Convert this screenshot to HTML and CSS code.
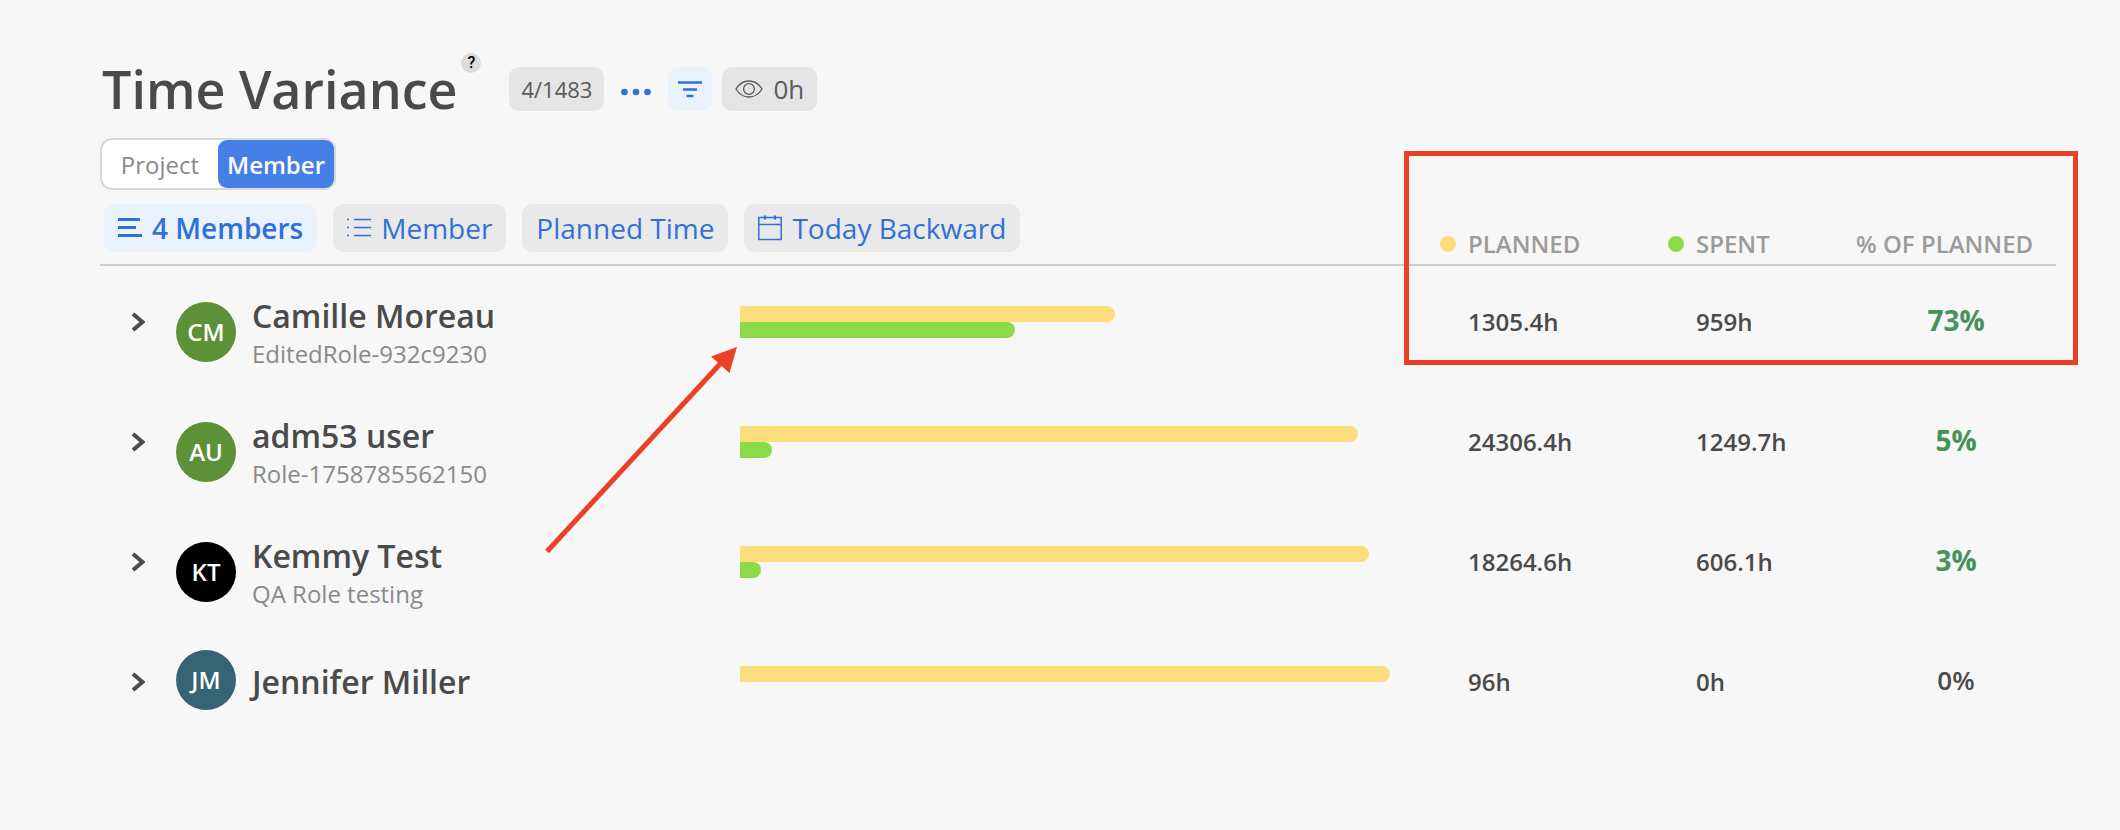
FILE: index.html
```html
<!DOCTYPE html>
<html lang="en">
<head>
    <meta charset="UTF-8">
    <meta name="viewport" content="width=device-width, initial-scale=1.0">
    <title>Time Variance</title>
    <link rel="stylesheet" href="styles.css">
</head>
<body>

    <div class="page">
        <!-- Title bar -->
        <header class="page-header">
            <div class="title-wrap">
                <h1>Time Variance</h1>
                <button type="button" class="help">?</button>
            </div>
            <button type="button" class="chip count">4/1483</button>
            <button type="button" class="more" aria-label="More">
                <svg width="30" height="8" viewBox="0 0 30 8"><circle cx="3.5" cy="4" r="3.3"/><circle cx="15" cy="4" r="3.3"/><circle cx="26.5" cy="4" r="3.3"/></svg>
            </button>
            <button type="button" class="chip filter" aria-label="Filter">
                <svg width="24" height="18" viewBox="0 0 24 18"><path d="M0 2.5h24M5 9.5h14M8.5 16h7"/></svg>
            </button>
            <button type="button" class="chip hours">
                <svg width="28" height="18" viewBox="0 0 28 18"><path d="M1 9C4 4 9 1 14 1s10 3 13 8c-3 5-8 8-13 8S4 14 1 9z"/><circle cx="14" cy="9" r="5.4"/></svg>
                0h
            </button>
        </header>

        <div class="toggle">
            <button type="button">Project</button>
            <button type="button" class="active">Member</button>
        </div>

        <!-- Variance table -->
        <div class="report">
            <table class="variance">
                <colgroup>
                    <col class="col-member">
                    <col>
                    <col class="col-planned">
                    <col class="col-spent">
                    <col class="col-percent">
                </colgroup>
                <thead>
                    <tr>
                        <th colspan="2">
                            <div class="toolbar">
                                <button type="button" class="pill active">
                                    <svg width="24" height="24" viewBox="0 0 24 24" stroke-width="3"><path d="M0 3.5h22M0 11.5h18M0 19.5h24"/></svg>
                                    4 Members
                                </button>
                                <button type="button" class="pill">
                                    <svg width="24" height="24" viewBox="0 0 24 24" stroke-width="1.5"><path d="M7 3.5h17M7 11.5h17M7 19.5h17M0 3.5h2M0 11.5h2M0 19.5h2"/></svg>
                                    Member
                                </button>
                                <button type="button" class="pill">Planned Time</button>
                                <button type="button" class="pill">
                                    <svg width="24" height="26" viewBox="0 0 24 26" stroke-width="1.5"><path d="M.8 2.5h22.4v22H.8zM.8 9.5h22.4"/><path d="M7 .5v4M17 .5v4" stroke-width="2.2"/></svg>
                                    Today Backward
                                </button>
                            </div>
                        </th>
                        <th><span class="legend planned">PLANNED</span></th>
                        <th><span class="legend spent">SPENT</span></th>
                        <th class="percent-head">% OF PLANNED</th>
                    </tr>
                </thead>
                <tbody>
                    <tr>
                        <td>
                            <div class="member">
                                <button type="button" class="expand" aria-label="Expand"><svg width="14" height="20" viewBox="0 0 14 20"><path d="M2 2l9.500 8L2 18"/></svg></button>
                                <span class="avatar green">CM</span>
                                <div class="who">
                                    <p class="name">Camille Moreau</p>
                                    <p class="role">EditedRole-932c9230</p>
                                </div>
                            </div>
                        </td>
                        <td>
                            <div class="bars">
                                <div class="bar planned" style="width: 57.7%"></div>
                                <div class="bar spent" style="width: 42.3%"></div>
                            </div>
                        </td>
                        <td class="value">1305.4h</td>
                        <td class="value">959h</td>
                        <td class="percent good">73%</td>
                    </tr>
                    <tr>
                        <td>
                            <div class="member">
                                <button type="button" class="expand" aria-label="Expand"><svg width="14" height="20" viewBox="0 0 14 20"><path d="M2 2l9.500 8L2 18"/></svg></button>
                                <span class="avatar green">AU</span>
                                <div class="who">
                                    <p class="name">adm53 user</p>
                                    <p class="role">Role-1758785562150</p>
                                </div>
                            </div>
                        </td>
                        <td>
                            <div class="bars">
                                <div class="bar planned" style="width: 95.1%"></div>
                                <div class="bar spent" style="width: 4.9%"></div>
                            </div>
                        </td>
                        <td class="value">24306.4h</td>
                        <td class="value">1249.7h</td>
                        <td class="percent good">5%</td>
                    </tr>
                    <tr>
                        <td>
                            <div class="member">
                                <button type="button" class="expand" aria-label="Expand"><svg width="14" height="20" viewBox="0 0 14 20"><path d="M2 2l9.500 8L2 18"/></svg></button>
                                <span class="avatar black">KT</span>
                                <div class="who">
                                    <p class="name">Kemmy Test</p>
                                    <p class="role">QA Role testing</p>
                                </div>
                            </div>
                        </td>
                        <td>
                            <div class="bars">
                                <div class="bar planned" style="width: 96.8%"></div>
                                <div class="bar spent" style="width: 3.2%"></div>
                            </div>
                        </td>
                        <td class="value">18264.6h</td>
                        <td class="value">606.1h</td>
                        <td class="percent good">3%</td>
                    </tr>
                    <tr>
                        <td>
                            <div class="member no-role">
                                <button type="button" class="expand" aria-label="Expand"><svg width="14" height="20" viewBox="0 0 14 20"><path d="M2 2l9.500 8L2 18"/></svg></button>
                                <span class="avatar teal">JM</span>
                                <div class="who">
                                    <p class="name">Jennifer Miller</p>
                                </div>
                            </div>
                        </td>
                        <td>
                            <div class="bars">
                                <div class="bar planned" style="width: 100%"></div>
                            </div>
                        </td>
                        <td class="value">96h</td>
                        <td class="value">0h</td>
                        <td class="percent">0%</td>
                    </tr>
                </tbody>
            </table>

            <!-- Callouts -->
            <div class="callout-box"></div>
            <svg class="callout-arrow" width="192" height="208" viewBox="0 0 192 208"><path d="M2 205.500L176 17" stroke="#eb4026" stroke-width="5"/><path d="M192 1L166 10.500L184.500 27z" fill="#eb4026"/></svg>
        </div>
    </div>

</body>
</html>
```
FILE: styles.css
```css
* {
    margin: 0;
    padding: 0;
    box-sizing: border-box;
}

body {
    font-family: 'Open Sans', 'Noto Sans', sans-serif;
    background: #f7f7f7;
    color: #4a4a4a;
}

button {
    font-family: inherit;
    color: inherit;
    background: none;
    border: none;
    cursor: pointer;
}

svg {
    display: block;
    flex-shrink: 0;
}

.page {
    padding: 53px 64px 40px 100px;
}

/* Title bar */
.page-header {
    display: flex;
    align-items: center;
}

.title-wrap {
    display: flex;
    align-items: flex-start;
    gap: 4px;
    padding-left: 2px;
    margin-right: 28px;
}

h1 {
    font-size: 52px;
    font-weight: 600;
    line-height: 72px;
}

.help {
    width: 20px;
    height: 20px;
    border-radius: 50%;
    background: #dcdcdc;
    color: #000;
    font-family: Roboto, sans-serif;
    font-size: 16px;
    font-weight: 500;
    line-height: 20px;
}

.chip {
    display: flex;
    align-items: center;
    justify-content: center;
    height: 44px;
    border-radius: 10px;
    background: #e5e5e5;
    color: #5a5a5a;
}

.count {
    padding: 0 12px;
    font-size: 22px;
}

.more {
    padding: 6px 17px 0;
    fill: #2f71d8;
}

.filter {
    width: 44px;
    margin-right: 10px;
    background: #eaf2fc;
}

.filter svg {
    fill: none;
    stroke: #2f71d8;
    stroke-width: 2.5;
}

.hours {
    gap: 10px;
    padding: 0 13px;
    font-size: 26px;
}

.hours svg {
    fill: none;
    stroke: #5a5a5a;
    stroke-width: 1.3;
}

/* Project / Member switch */
.toggle {
    display: flex;
    width: fit-content;
    margin-top: 13px;
    border: 2px solid #d8d8d8;
    border-radius: 12px;
    background: #fff;
}

.toggle button {
    width: 116px;
    height: 48px;
    border-radius: 9px;
    font-size: 24px;
    color: #8a8a8a;
}

.toggle .active {
    background: #467fe6;
    color: #fff;
    font-weight: 600;
}

/* Variance table */
.report {
    position: relative;
}

.variance {
    width: 100%;
    table-layout: fixed;
    border-collapse: separate;
    border-spacing: 0;
}

.col-member {
    width: 640px;
}

.col-planned {
    width: 228px;
}

.col-spent {
    width: 188px;
}

.col-percent {
    width: 200px;
}

th {
    padding-bottom: 4px;
    border-bottom: 2px solid #cbcbcb;
    font-size: 24px;
    font-weight: 600;
    line-height: 32px;
    text-align: left;
    vertical-align: bottom;
    color: #9b9b9b;
}

.percent-head {
    white-space: nowrap;
}

.toolbar {
    display: flex;
    gap: 16px;
    padding: 14px 0 8px 4px;
}

.pill {
    display: flex;
    align-items: center;
    gap: 10px;
    height: 48px;
    padding: 0 14px;
    border-radius: 10px;
    background: #e9e9e9;
    color: #2f71d8;
    font-size: 28px;
    white-space: nowrap;
}

.pill.active {
    background: #eaf2fc;
    font-weight: 600;
}

.pill svg {
    fill: none;
    stroke: #2f71d8;
}

.legend {
    display: flex;
    align-items: center;
    gap: 12px;
}

.legend::before {
    content: "";
    width: 16px;
    height: 16px;
    border-radius: 50%;
}

.planned::before,
.bar.planned {
    background: #fbdd7a;
}

.spent::before,
.bar.spent {
    background: #8adb47;
}

td {
    height: 120px;
    vertical-align: top;
}

.member {
    display: flex;
    align-items: center;
    padding: 27px 0 0 31px;
}

.member.no-role {
    padding-top: 24px;
}

.expand {
    align-self: flex-start;
    padding-top: 19px;
    margin-right: 31px;
}

.no-role .expand {
    padding-top: 22px;
}

.expand svg {
    fill: none;
    stroke: #4a4a4a;
    stroke-width: 4;
}

.avatar {
    width: 60px;
    height: 60px;
    margin-right: 16px;
    border-radius: 50%;
    color: #fff;
    font-size: 24px;
    font-weight: 600;
    line-height: 60px;
    text-align: center;
}

.green {
    background: #5c9138;
}

.black {
    background: #000;
}

.teal {
    background: #356575;
}

.who {
    padding-top: 2px;
}

.no-role .who {
    padding-top: 4px;
}

.name {
    font-size: 32px;
    font-weight: 600;
    line-height: 42px;
}

.role {
    font-size: 24px;
    line-height: 34px;
    color: #8a8a8a;
}

.bars {
    padding: 40px 50px 0 0;
}

.bar {
    height: 16px;
    border-radius: 0 8px 8px 0;
}

.value {
    padding: 40px 0 0 28px;
    font-size: 24px;
    font-weight: 600;
    line-height: 32px;
}

.percent {
    padding-top: 38px;
    font-size: 26px;
    font-weight: 600;
    line-height: 32px;
    text-align: center;
}

.percent.good {
    font-size: 28px;
    font-weight: 700;
    color: #46935a;
}

/* Callouts */
.callout-box {
    position: absolute;
    top: -39px;
    right: -22px;
    width: 674px;
    height: 214px;
    border: 5px solid #eb4026;
    pointer-events: none;
}

.callout-arrow {
    position: absolute;
    top: 156px;
    left: 445px;
    pointer-events: none;
}
```
